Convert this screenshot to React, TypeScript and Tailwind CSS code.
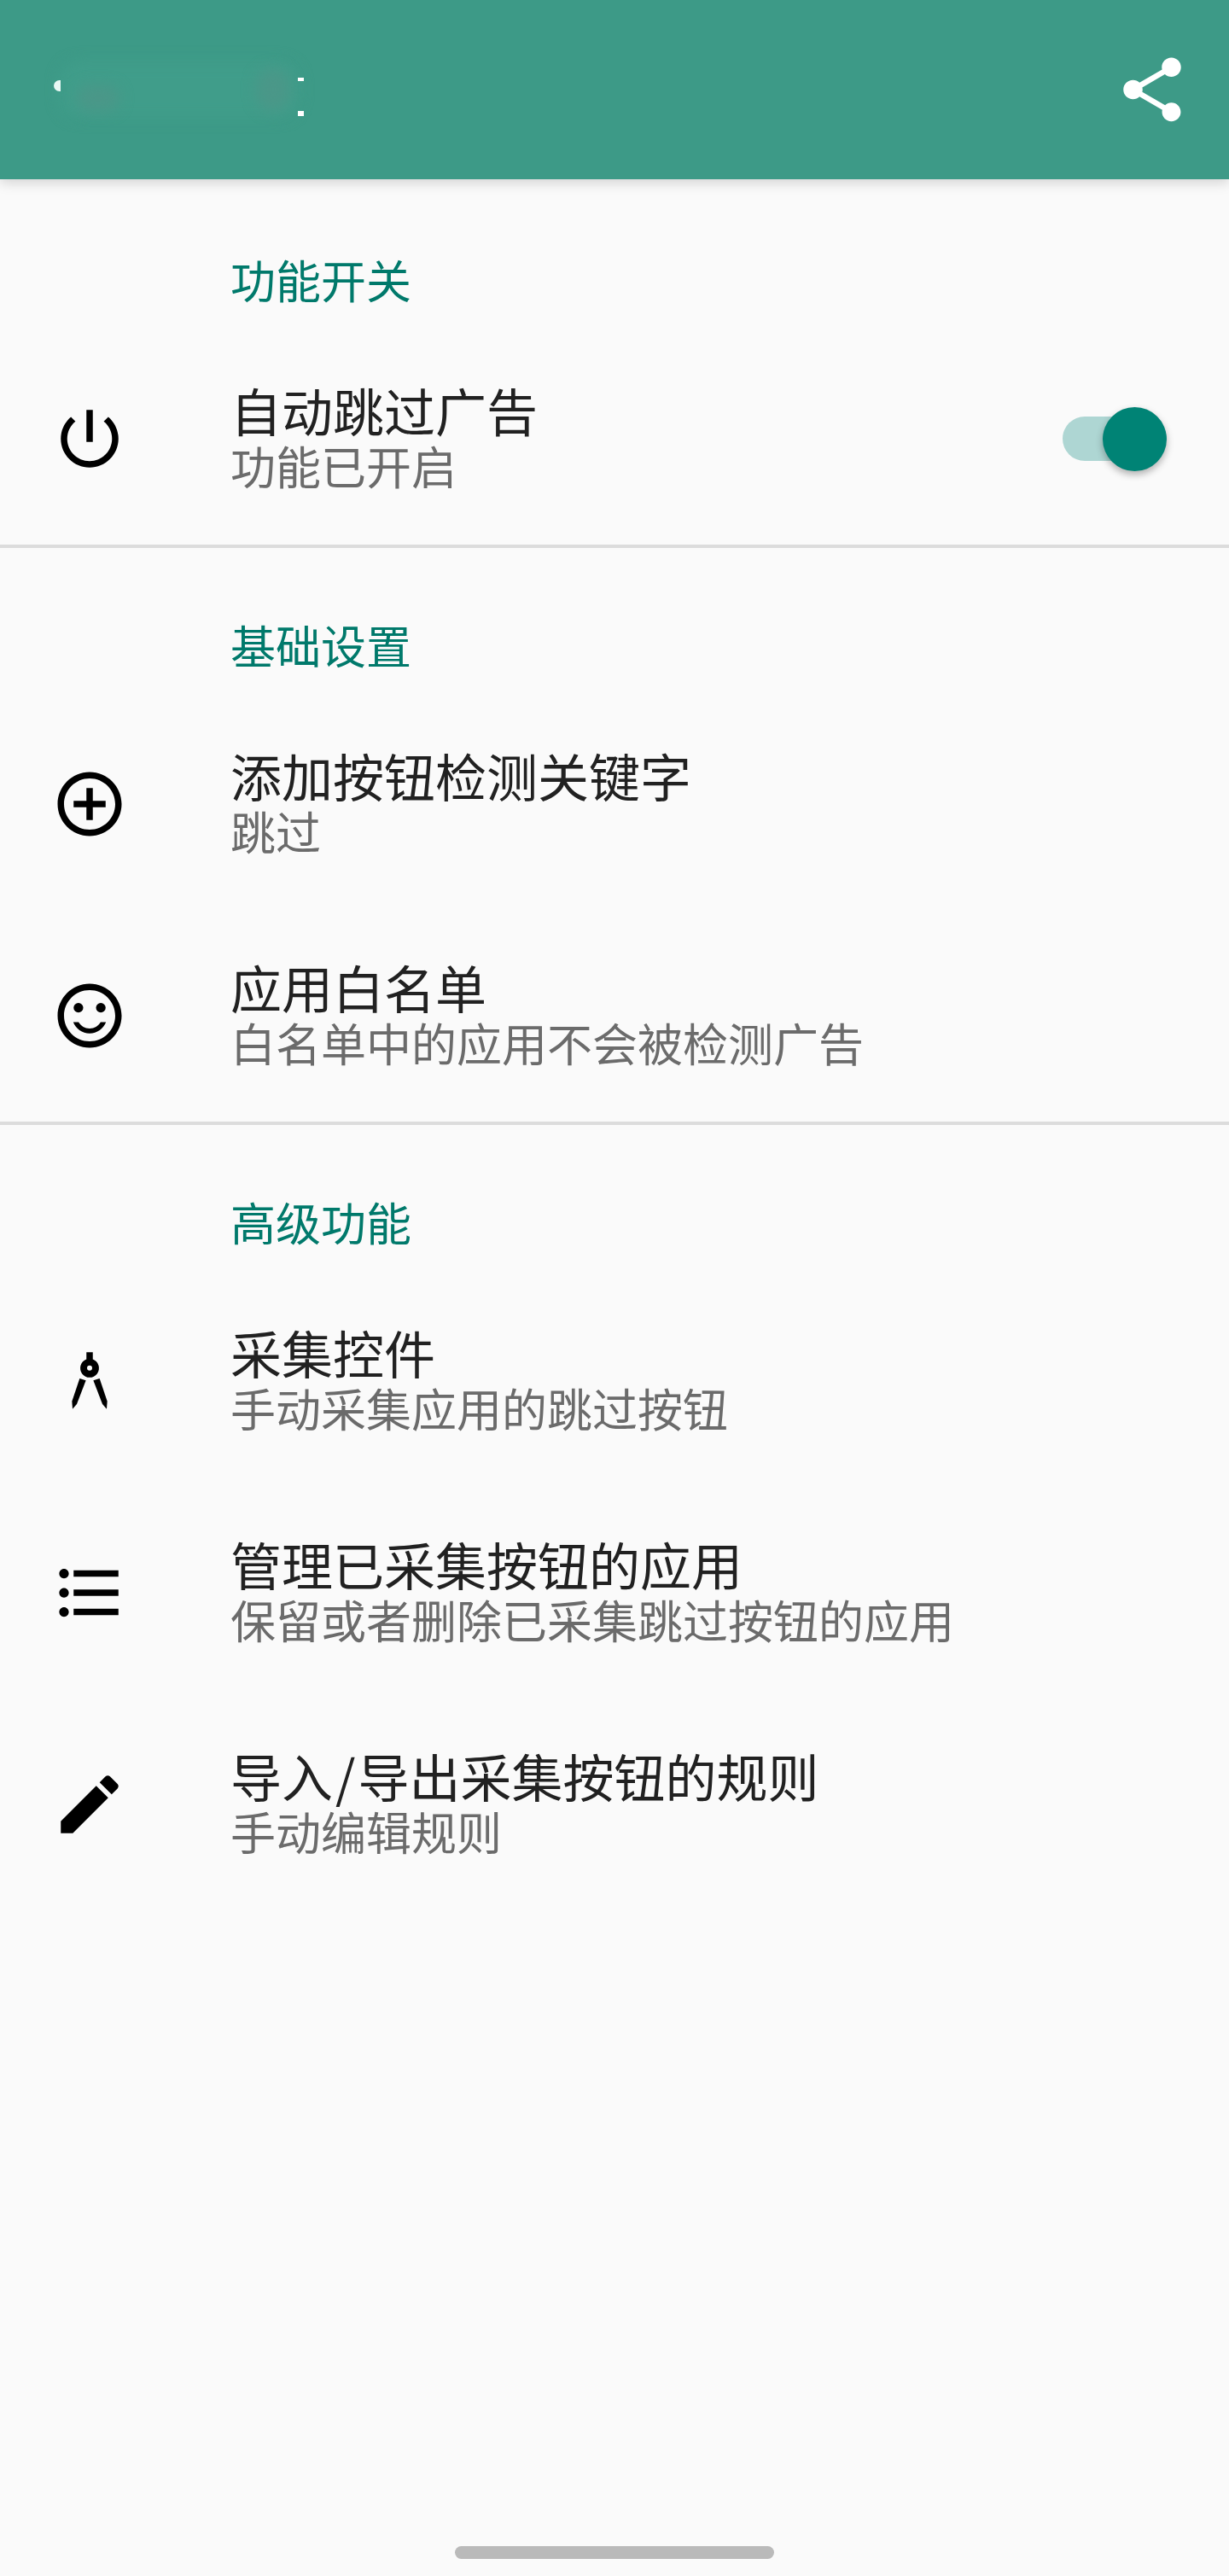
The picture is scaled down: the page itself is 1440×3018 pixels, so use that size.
import type { ReactNode } from "react"

const fontStack = { fontFamily: '"Noto Sans CJK SC", "Noto Sans", sans-serif' }

const PowerIcon = () => (
  <svg viewBox="0 0 24 24" className="w-[90px] h-[90px]" fill="currentColor">
    <path d="M13 3h-2v10h2V3zm4.83 2.17l-1.42 1.42C17.99 7.86 19 9.81 19 12c0 3.87-3.13 7-7 7s-7-3.13-7-7c0-2.19 1.01-4.14 2.58-5.42L6.17 5.17C4.23 6.82 3 9.26 3 12c0 4.97 4.03 9 9 9s9-4.03 9-9c0-2.74-1.23-5.18-3.17-6.83z" />
  </svg>
)

const AddIcon = () => (
  <svg viewBox="0 0 24 24" className="w-[90px] h-[90px]" fill="currentColor">
    <path d="M13 7h-2v4H7v2h4v4h2v-4h4v-2h-4V7zm-1-5C6.48 2 2 6.48 2 12s4.48 10 10 10 10-4.48 10-10S17.52 2 12 2zm0 18c-4.41 0-8-3.59-8-8s3.59-8 8-8 8 3.59 8 8-3.59 8-8 8z" />
  </svg>
)

const SmileIcon = () => (
  <svg viewBox="0 0 24 24" className="w-[90px] h-[90px]" fill="currentColor">
    <circle cx="8.5" cy="9.5" r="1.5" />
    <circle cx="15.5" cy="9.5" r="1.5" />
    <path d="M12 2C6.47 2 2 6.48 2 12s4.47 10 10 10c5.52 0 10-4.48 10-10S17.52 2 12 2zm0 18c-4.42 0-8-3.58-8-8s3.58-8 8-8 8 3.58 8 8-3.58 8-8 8zm0-2.5c2.33 0 4.32-1.45 5.12-3.5h-1.67c-.69 1.19-1.97 2-3.45 2s-2.75-.81-3.45-2H6.88c.8 2.05 2.79 3.5 5.12 3.5z" />
  </svg>
)

const CompassIcon = () => (
  <svg viewBox="0 0 24 24" className="w-[90px] h-[90px]" fill="currentColor">
    <path d="M8.89 11.2L10.84 11.82 8 19.2 6.67 20.7 6.49 18.3z" />
    <path d="M15.11 11.2L13.16 11.82 16 19.2 17.33 20.7 17.51 18.3z" />
    <path fillRule="evenodd" d="M11 3h2v2.2a2.93 2.93 0 1 1-2 0V3zm1 4.1a.8.8 0 1 0 0 1.6.8.8 0 0 0 0-1.6z" />
  </svg>
)

const ListIcon = () => (
  <svg viewBox="0 0 24 24" className="w-[90px] h-[90px]" fill="currentColor">
    <path d="M4 10.5c-.83 0-1.5.67-1.5 1.5s.67 1.5 1.5 1.5 1.5-.67 1.5-1.5-.67-1.5-1.5-1.5zm0-6c-.83 0-1.5.67-1.5 1.5S3.17 7.5 4 7.5 5.5 6.83 5.5 6 4.83 4.5 4 4.5zm0 12c-.83 0-1.5.68-1.5 1.5s.68 1.5 1.5 1.5 1.5-.68 1.5-1.5-.67-1.5-1.5-1.5zM7 19h14v-2H7v2zm0-6h14v-2H7v2zm0-8v2h14V5H7z" />
  </svg>
)

const EditIcon = () => (
  <svg viewBox="0 0 24 24" className="w-[90px] h-[90px]" fill="currentColor">
    <path d="M3 17.25V21h3.75L17.81 9.94l-3.75-3.75L3 17.25zM20.71 7.04c.39-.39.39-1.02 0-1.41l-2.34-2.34c-.39-.39-1.02-.39-1.41 0l-1.83 1.83 3.75 3.75 1.83-1.83z" />
  </svg>
)

const ShareIcon = () => (
  <svg viewBox="0 0 24 24" className="w-[90px] h-[90px]" fill="white">
    <path d="M18 16.08c-.76 0-1.44.3-1.96.77L8.91 12.7c.05-.23.09-.46.09-.7s-.04-.47-.09-.7l7.05-4.11c.54.5 1.25.81 2.04.81 1.66 0 3-1.34 3-3s-1.34-3-3-3-3 1.34-3 3c0 .24.04.47.09.7L8.04 9.81C7.5 9.31 6.79 9 6 9c-1.66 0-3 1.34-3 3s1.34 3 3 3c.79 0 1.5-.31 2.04-.81l7.12 4.16c-.05.21-.08.43-.08.65 0 1.61 1.31 2.92 2.92 2.92s2.92-1.31 2.92-2.92-1.31-2.92-2.92-2.92z" />
  </svg>
)

const Toggle = () => (
  <div className="relative w-[122px] h-[75px] mr-[73px] flex items-center shrink-0">
    <div className="w-[100px] h-[52px] rounded-full bg-[#aed6d3]" />
    <div className="absolute right-0 top-0 w-[75px] h-[75px] rounded-full bg-[#008375] shadow-[0_4px_8px_rgba(0,0,0,0.3)]" />
  </div>
)

const SectionTitle = ({ title, first }: { title: string; first?: boolean }) => (
  <div className={`${first ? "h-[180px] pt-[87px]" : "h-[176px] pt-[83px]"} pl-[270px] text-[53px] leading-[60px] text-[#00796b]`}>
    {title}
  </div>
)

const Row = ({ icon, title, sub, right }: { icon: ReactNode; title: ReactNode; sub: string; right?: ReactNode }) => (
  <div className="h-[248px] flex items-center">
    <div className="w-[270px] pl-[60px] shrink-0 text-black">{icon}</div>
    <div className="flex-1 flex flex-col mb-[6px]">
      <span className="text-[60px] leading-[68px] text-[#212121]">{title}</span>
      <span className="text-[53px] leading-[62px] text-[#6b6b6b]">{sub}</span>
    </div>
    {right}
  </div>
)

const Divider = () => <div className="h-[4px] bg-[#dcdcdc]" />

export default function App() {
  return (
    <div className="relative w-[1440px] h-[3018px] bg-[#fafafa] overflow-hidden flex flex-col" style={fontStack}>
      <header className="relative h-[210px] shrink-0 bg-[#3d9a87] flex items-center justify-end pr-[45px] shadow-[0_4px_14px_rgba(0,0,0,0.16)]">
        {/* smudged-out app title */}
        <div className="absolute left-[70px] top-[72px] w-[280px] h-[66px] rounded-[24px] bg-[#409d8a] blur-[8px]" />
        <div className="absolute left-[90px] top-[100px] w-[50px] h-[30px] rounded-full bg-[#4a9788] blur-[8px]" />
        <div className="absolute left-[300px] top-[80px] w-[40px] h-[50px] rounded-full bg-[#4a9788] blur-[8px]" />
        <div className="absolute left-[63px] top-[94px] w-[8px] h-[13px] rounded-l-full bg-[#e8f8f4]" />
        <div className="absolute left-[349px] top-[91px] w-[7px] h-[4px] bg-white" />
        <div className="absolute left-[349px] top-[130px] w-[7px] h-[6px] bg-white" />
        <ShareIcon />
      </header>

      <SectionTitle title="功能开关" first />
      <Row icon={<PowerIcon />} title="自动跳过广告" sub="功能已开启" right={<Toggle />} />
      <Divider />

      <SectionTitle title="基础设置" />
      <Row icon={<AddIcon />} title="添加按钮检测关键字" sub="跳过" />
      <Row icon={<SmileIcon />} title="应用白名单" sub="白名单中的应用不会被检测广告" />
      <Divider />

      <SectionTitle title="高级功能" />
      <Row icon={<CompassIcon />} title="采集控件" sub="手动采集应用的跳过按钮" />
      <Row icon={<ListIcon />} title="管理已采集按钮的应用" sub="保留或者删除已采集跳过按钮的应用" />
      <Row
        icon={<EditIcon />}
        title={<>导入<span className="px-[3px]">/</span>导出采集按钮的规则</>}
        sub="手动编辑规则"
      />

      <div className="absolute left-[533px] top-[2983px] w-[374px] h-[15px] rounded-full bg-[#bababa]" />
    </div>
  )
}
